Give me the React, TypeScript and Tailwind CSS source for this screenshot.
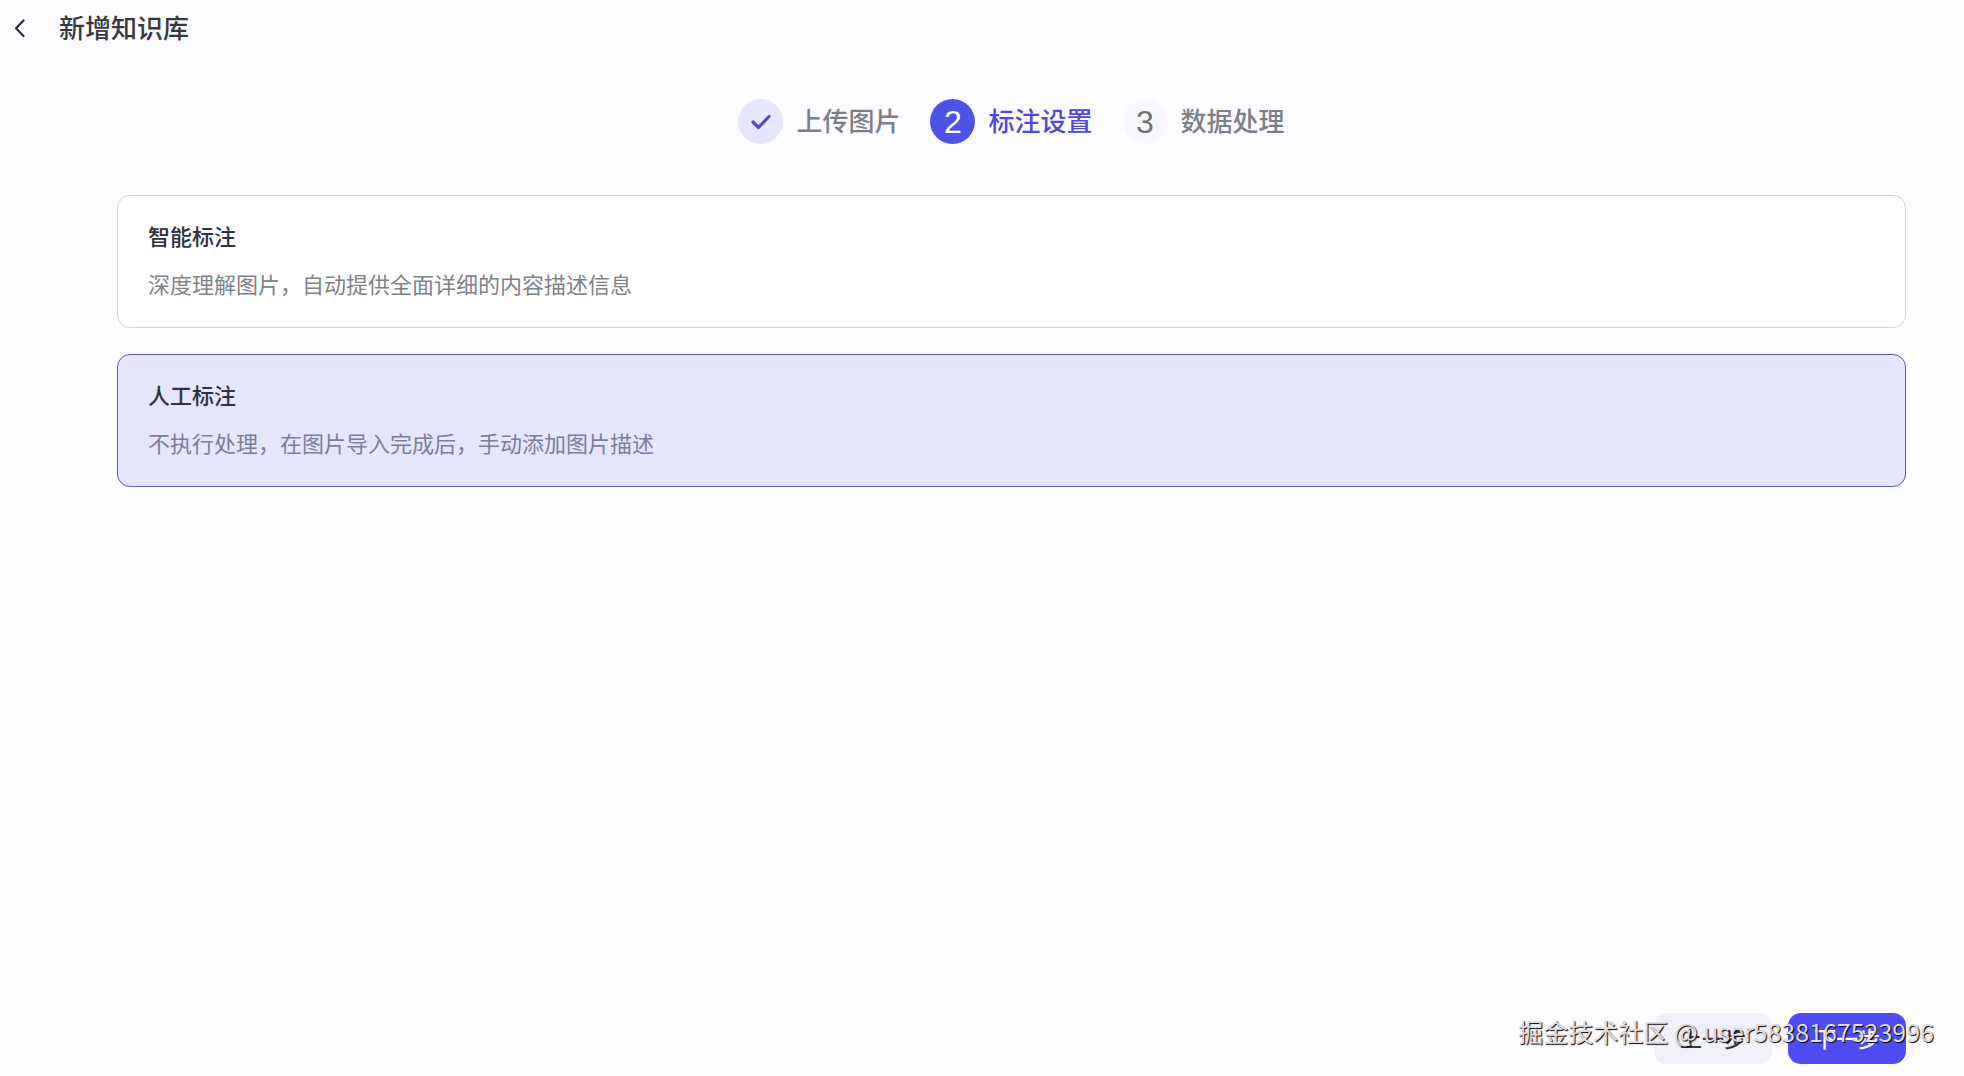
import { useState } from "react";

const STEPS = ["上传图片", "标注设置", "数据处理"];

const MODES = [
  {
    value: "auto",
    title: "智能标注",
    desc: "深度理解图片，自动提供全面详细的内容描述信息",
  },
  {
    value: "manual",
    title: "人工标注",
    desc: "不执行处理，在图片导入完成后，手动添加图片描述",
  },
];

interface StepItemProps {
  index: number;
  current: number;
  label: string;
}

function StepItem({ index, current, label }: StepItemProps) {
  const done = index < current;
  const active = index === current;

  return (
    <li
      className="flex items-center gap-[13px]"
      aria-current={active ? "step" : undefined}
    >
      <span
        className={`flex h-[45px] w-[45px] items-center justify-center rounded-full font-['Liberation_Sans',sans-serif] text-[32px] leading-none ${
          active
            ? "bg-[#4d53e8] text-white"
            : done
              ? "bg-[#e6e7fc] text-[#5147d1]"
              : "bg-[#f7f7fb] text-[#6f7178]"
        }`}
      >
        {done ? (
          <svg
            width="22"
            height="18"
            viewBox="0 0 22 18"
            fill="none"
            stroke="currentColor"
            strokeWidth="3.2"
            strokeLinecap="round"
            strokeLinejoin="round"
            aria-hidden="true"
          >
            <path d="M3 9l5.500 5.500L19 3.500" />
          </svg>
        ) : (
          index
        )}
      </span>
      <span
        className={`pb-1 text-[26px] leading-9 font-medium ${
          active ? "text-[#5147d8]" : "text-[#7d7f88]"
        }`}
      >
        {label}
      </span>
    </li>
  );
}

export default function App() {
  const [mode, setMode] = useState("manual");

  return (
    <div className="relative flex min-h-screen flex-col bg-[#fcfcff] font-['Noto_Sans_CJK_SC',sans-serif]">
      <header className="flex h-14 items-center gap-[25px] pl-1.5">
        <button
          type="button"
          aria-label="返回"
          className="flex h-7 w-7 items-center justify-center text-[#2e3038]"
        >
          <svg
            width="12"
            height="18"
            viewBox="0 0 12 18"
            fill="none"
            stroke="currentColor"
            strokeWidth="2.2"
            strokeLinecap="round"
            strokeLinejoin="round"
            aria-hidden="true"
          >
            <path d="M9.500 1.500L2 9.300L9.500 17" />
          </svg>
        </button>
        <h1 className="pb-0.5 text-[26px] leading-9 font-medium text-[#37383f]">
          新增知识库
        </h1>
      </header>

      <main className="flex flex-1 flex-col pt-[43px] pr-[58px] pl-[117px]">
        <ol className="flex justify-center gap-[30px]">
          {STEPS.map((label, i) => (
            <StepItem key={label} index={i + 1} current={2} label={label} />
          ))}
        </ol>

        <fieldset className="mt-[51px] flex flex-col gap-[26px]">
          {MODES.map((item) => (
            <label
              key={item.value}
              className={`relative block cursor-pointer rounded-[13px] border px-[30px] pt-[21px] pb-[26px] ${
                mode === item.value
                  ? "border-[#5d59b5] bg-[#e5e6fc]"
                  : "border-[#d3d3dc] bg-white"
              }`}
            >
              <input
                type="radio"
                name="mode"
                value={item.value}
                checked={mode === item.value}
                onChange={() => setMode(item.value)}
                className="sr-only"
              />
              <span className="block text-[22px] leading-9 font-medium text-[#2f323e]">
                {item.title}
              </span>
              <span
                className={`mt-3 block text-[22px] leading-9 ${
                  mode === item.value ? "text-[#7b7e99]" : "text-[#808288]"
                }`}
              >
                {item.desc}
              </span>
            </label>
          ))}
        </fieldset>
      </main>

      <footer className="flex justify-end gap-4 pr-[58px] pb-3">
        <button
          type="button"
          className="h-[51px] rounded-[13px] bg-[#f0f0f8] px-[26px] pb-0.5 text-[22px] font-medium text-[#37383f]"
        >
          上一步
        </button>
        <button
          type="button"
          className="h-[51px] rounded-[13px] bg-[#4f4cf5] px-[26px] pb-0.5 text-[22px] font-medium text-white"
        >
          下一步
        </button>
      </footer>

      <p className="pointer-events-none absolute right-[30px] bottom-[27px] text-[25px] leading-9 text-[#dcdce2] [text-shadow:1px_1px_1px_#000]">
        掘金技术社区 @ user5838167523996
      </p>
    </div>
  );
}
